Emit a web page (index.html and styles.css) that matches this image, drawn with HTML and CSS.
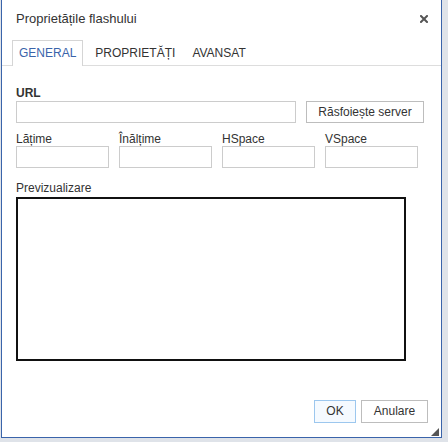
FILE: index.html
```html
<!DOCTYPE html>
<html lang="ro">
<head>
<meta charset="utf-8">
<title>Proprietățile flashului</title>
<link rel="stylesheet" href="styles.css">
</head>
<body>
<div class="dialog">
  <div class="titlebar">
    <span class="title">Proprietățile flashului</span>
    <svg class="close" width="8" height="8" viewBox="0 0 8 8"><path d="M1 1L7 7M7 1L1 7" stroke="#555" stroke-width="2" stroke-linecap="square"/></svg>
  </div>
  <div class="tabs">
    <div class="tab active">GENERAL</div>
    <div class="tab">PROPRIETĂȚI</div>
    <div class="tab">AVANSAT</div>
  </div>
  <div class="content">
    <div class="label bold">URL</div>
    <div class="url-row">
      <div class="input url"></div>
      <div class="btn browse">Răsfoiește server</div>
    </div>
    <div class="dims">
      <div class="field"><div class="label">Lățime</div><div class="input"></div></div>
      <div class="field"><div class="label">Înălțime</div><div class="input"></div></div>
      <div class="field"><div class="label">HSpace</div><div class="input"></div></div>
      <div class="field"><div class="label">VSpace</div><div class="input"></div></div>
    </div>
    <div class="label preview-label">Previzualizare</div>
    <div class="preview"></div>
  </div>
  <div class="footer">
    <div class="btn ok">OK</div>
    <div class="btn cancel">Anulare</div>
  </div>
  <div class="grip"></div>
</div>
</body>
</html>
```

FILE: styles.css
```css
html, body {
  margin: 0;
  padding: 0;
}
body {
  background: #dfe3e9;
  width: 448px;
  height: 442px;
  font-family: "Liberation Sans", Arial, sans-serif;
  color: #333;
}
.dialog {
  position: relative;
  box-sizing: border-box;
  width: 441px;
  height: 438px;
  margin-left: 1px;
  background: #fff;
  border: 1px solid #3a64aa;
  border-top: 0;
  display: flex;
  flex-direction: column;
}
.titlebar {
  height: 40px;
  box-sizing: border-box;
  padding: 11px 13px 0 14px;
  display: flex;
  justify-content: space-between;
  align-items: flex-start;
}
.title {
  font-size: 13px;
  line-height: 15px;
  color: #333;
}
.close {
  margin-top: 4px;
}
.tabs {
  display: flex;
  padding-left: 10px;
  border-bottom: 1px solid #ddd;
}
.tab {
  font-size: 12px;
  line-height: 14px;
  padding: 5px 6px;
  border: 1px solid transparent;
  border-bottom: 0;
  margin-right: 3px;
  color: #333;
  white-space: nowrap;
}
.tab.active {
  border-color: #d5d5d5;
  color: #3a64aa;
  background: #fff;
  margin-bottom: -1px;
  margin-right: 5px;
  padding-bottom: 6px;
}
.content {
  padding: 20px 14px 0 14px;
  flex: 1;
}
.label {
  font-size: 12px;
  line-height: 14px;
  color: #333;
  white-space: nowrap;
}
.bold {
  font-weight: bold;
}
.input {
  box-sizing: border-box;
  height: 22px;
  width: 100%;
  border: 1px solid #cccccc;
  background: #fff;
}
.url-row {
  display: flex;
  margin-top: 1px;
}
.url {
  width: 280px;
  flex: none;
}
.btn {
  box-sizing: border-box;
  height: 22px;
  border: 1px solid #bdbdbd;
  background: #fff;
  font-size: 12px;
  line-height: 20px;
  text-align: center;
  color: #333;
  white-space: nowrap;
}
.browse {
  width: 118px;
  margin-left: 10px;
}
.dims {
  display: flex;
  gap: 10px;
  margin-top: 9px;
}
.field {
  width: 93px;
  flex: none;
}
.preview-label {
  margin-top: 13px;
}
.preview {
  box-sizing: border-box;
  margin-top: 2px;
  width: 390px;
  height: 164px;
  border: 2px solid #111;
}
.footer {
  display: flex;
  justify-content: flex-end;
  gap: 5px;
  padding: 0 13px 14px 0;
}
.footer .btn {
  height: 23px;
  line-height: 21px;
}
.ok {
  width: 42px;
  border-color: #9cc7ee;
  background: #f5faff;
}
.cancel {
  width: 67px;
}
.grip {
  position: absolute;
  right: 2px;
  bottom: 1px;
  width: 0;
  height: 0;
  border-left: 8px solid transparent;
  border-bottom: 8px solid #555;
}
```
